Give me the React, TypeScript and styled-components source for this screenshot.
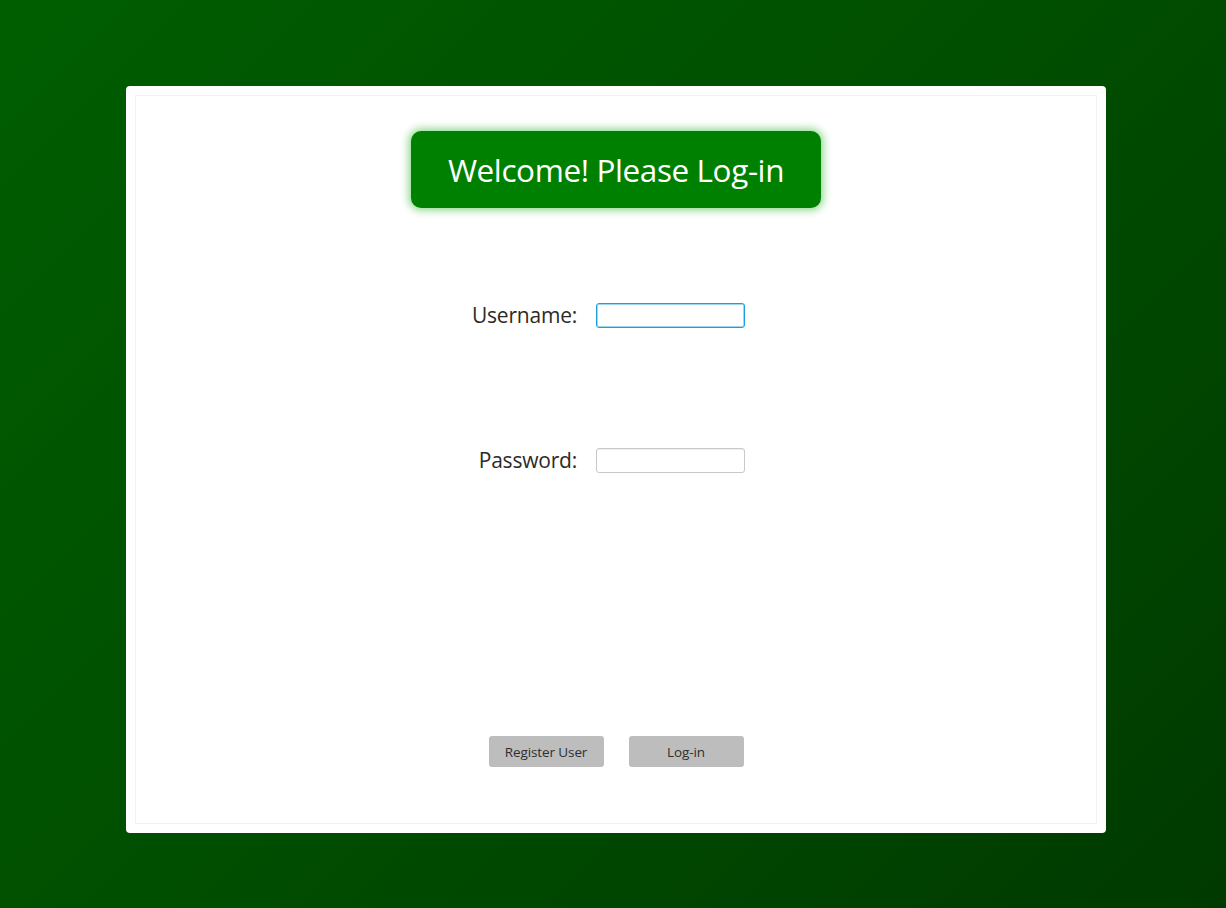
import styled, { createGlobalStyle } from "styled-components";

const GlobalStyle = createGlobalStyle`
  html, body {
    margin: 0;
    padding: 0;
  }
  body {
    width: 1226px;
    height: 908px;
    overflow: hidden;
    background: linear-gradient(135deg, #005e00 0%, #004e00 50%, #003a00 100%);
    font-family: "Open Sans", "Noto Sans", sans-serif;
  }
`;

const Page = styled.div`
  box-sizing: border-box;
  height: 908px;
  padding: 86px 120px 75px 126px;
  display: flex;
`;

const Card = styled.div`
  flex: 1;
  background: #ffffff;
  border-radius: 4px;
  padding: 9px;
  display: flex;
`;

const Frame = styled.div`
  flex: 1;
  border: 1px solid #f2f2f2;
  display: flex;
  flex-direction: column;
  align-items: center;
  padding-top: 35px;
`;

const Banner = styled.div`
  width: 410px;
  height: 77px;
  box-sizing: border-box;
  background: #008000;
  border-radius: 10px;
  box-shadow: 0 0 8px 2px rgba(90, 200, 90, 0.75);
  color: #ffffff;
  font-size: 31.5px;
  display: flex;
  align-items: center;
  justify-content: center;
  letter-spacing: -0.4px;
`;

const Form = styled.div`
  margin-top: 93px;
  display: grid;
  grid-template-columns: auto 150px;
  column-gap: 19px;
  row-gap: 117px;
  align-items: center;
  margin-left: -14px;
`;

const Label = styled.label`
  justify-self: end;
  font-size: 21px;
  color: #2e2a26;
  letter-spacing: -0.2px;
`;

const Field = styled.input<{ $focused?: boolean }>`
  box-sizing: border-box;
  width: 149px;
  height: 25px;
  border-radius: 3px;
  border: 1px solid ${({ $focused }) => ($focused ? "#1a9ee0" : "#c8c8c8")};
  box-shadow: ${({ $focused }) =>
    $focused ? "0 0 0 1px #9fd6f2 inset" : "inset 0 1px 1px #eee"};
  outline: none;
  padding: 0 6px;
  font-family: inherit;
  font-size: 13px;
`;

const Buttons = styled.div`
  margin-top: auto;
  margin-bottom: 56px;
  display: flex;
  gap: 25px;
`;

const Button = styled.button`
  width: 115px;
  height: 31px;
  border: none;
  border-radius: 3px;
  background: #bdbdbd;
  color: #2e2e2e;
  font-family: inherit;
  font-size: 13.5px;
  letter-spacing: -0.1px;
  cursor: pointer;
`;

export default function App() {
  return (
    <>
      <GlobalStyle />
      <Page>
        <Card>
          <Frame>
            <Banner>Welcome! Please Log-in</Banner>
            <Form>
              <Label htmlFor="username">Username:</Label>
              <Field id="username" type="text" $focused autoFocus />
              <Label htmlFor="password">Password:</Label>
              <Field id="password" type="password" />
            </Form>
            <Buttons>
              <Button>Register User</Button>
              <Button>Log-in</Button>
            </Buttons>
          </Frame>
        </Card>
      </Page>
    </>
  );
}
